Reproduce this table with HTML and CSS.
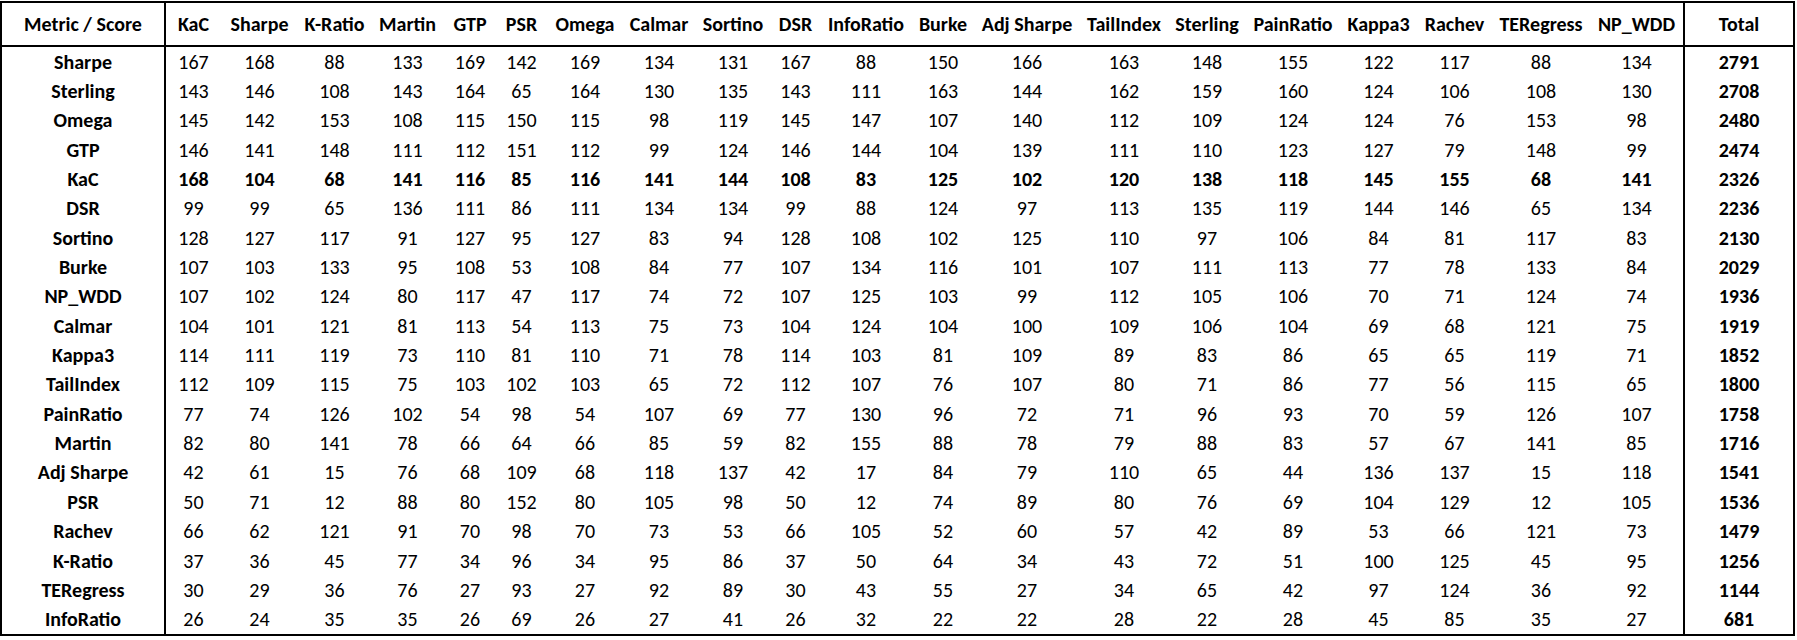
FILE: index.html
```html
<!DOCTYPE html>
<html lang="en">
<head>
<meta charset="utf-8">
<title>Metric / Score</title>
<link rel="stylesheet" href="styles.css">
</head>
<body>
<div class="table">
  <div class="row head">
    <div class="c metric">Metric / Score</div>
    <div class="c">KaC</div><div class="c">Sharpe</div><div class="c">K-Ratio</div><div class="c">Martin</div><div class="c">GTP</div><div class="c">PSR</div><div class="c">Omega</div><div class="c">Calmar</div><div class="c">Sortino</div><div class="c">DSR</div><div class="c">InfoRatio</div><div class="c">Burke</div><div class="c">Adj Sharpe</div><div class="c">TailIndex</div><div class="c">Sterling</div><div class="c">PainRatio</div><div class="c">Kappa3</div><div class="c">Rachev</div><div class="c">TERegress</div><div class="c">NP_WDD</div>
    <div class="c total">Total</div>
  </div>
  <div class="row"><div class="c metric">Sharpe</div><div class="c">167</div><div class="c">168</div><div class="c">88</div><div class="c">133</div><div class="c">169</div><div class="c">142</div><div class="c">169</div><div class="c">134</div><div class="c">131</div><div class="c">167</div><div class="c">88</div><div class="c">150</div><div class="c">166</div><div class="c">163</div><div class="c">148</div><div class="c">155</div><div class="c">122</div><div class="c">117</div><div class="c">88</div><div class="c">134</div><div class="c total">2791</div></div>
  <div class="row"><div class="c metric">Sterling</div><div class="c">143</div><div class="c">146</div><div class="c">108</div><div class="c">143</div><div class="c">164</div><div class="c">65</div><div class="c">164</div><div class="c">130</div><div class="c">135</div><div class="c">143</div><div class="c">111</div><div class="c">163</div><div class="c">144</div><div class="c">162</div><div class="c">159</div><div class="c">160</div><div class="c">124</div><div class="c">106</div><div class="c">108</div><div class="c">130</div><div class="c total">2708</div></div>
  <div class="row"><div class="c metric">Omega</div><div class="c">145</div><div class="c">142</div><div class="c">153</div><div class="c">108</div><div class="c">115</div><div class="c">150</div><div class="c">115</div><div class="c">98</div><div class="c">119</div><div class="c">145</div><div class="c">147</div><div class="c">107</div><div class="c">140</div><div class="c">112</div><div class="c">109</div><div class="c">124</div><div class="c">124</div><div class="c">76</div><div class="c">153</div><div class="c">98</div><div class="c total">2480</div></div>
  <div class="row"><div class="c metric">GTP</div><div class="c">146</div><div class="c">141</div><div class="c">148</div><div class="c">111</div><div class="c">112</div><div class="c">151</div><div class="c">112</div><div class="c">99</div><div class="c">124</div><div class="c">146</div><div class="c">144</div><div class="c">104</div><div class="c">139</div><div class="c">111</div><div class="c">110</div><div class="c">123</div><div class="c">127</div><div class="c">79</div><div class="c">148</div><div class="c">99</div><div class="c total">2474</div></div>
  <div class="row strong"><div class="c metric">KaC</div><div class="c">168</div><div class="c">104</div><div class="c">68</div><div class="c">141</div><div class="c">116</div><div class="c">85</div><div class="c">116</div><div class="c">141</div><div class="c">144</div><div class="c">108</div><div class="c">83</div><div class="c">125</div><div class="c">102</div><div class="c">120</div><div class="c">138</div><div class="c">118</div><div class="c">145</div><div class="c">155</div><div class="c">68</div><div class="c">141</div><div class="c total">2326</div></div>
  <div class="row"><div class="c metric">DSR</div><div class="c">99</div><div class="c">99</div><div class="c">65</div><div class="c">136</div><div class="c">111</div><div class="c">86</div><div class="c">111</div><div class="c">134</div><div class="c">134</div><div class="c">99</div><div class="c">88</div><div class="c">124</div><div class="c">97</div><div class="c">113</div><div class="c">135</div><div class="c">119</div><div class="c">144</div><div class="c">146</div><div class="c">65</div><div class="c">134</div><div class="c total">2236</div></div>
  <div class="row"><div class="c metric">Sortino</div><div class="c">128</div><div class="c">127</div><div class="c">117</div><div class="c">91</div><div class="c">127</div><div class="c">95</div><div class="c">127</div><div class="c">83</div><div class="c">94</div><div class="c">128</div><div class="c">108</div><div class="c">102</div><div class="c">125</div><div class="c">110</div><div class="c">97</div><div class="c">106</div><div class="c">84</div><div class="c">81</div><div class="c">117</div><div class="c">83</div><div class="c total">2130</div></div>
  <div class="row"><div class="c metric">Burke</div><div class="c">107</div><div class="c">103</div><div class="c">133</div><div class="c">95</div><div class="c">108</div><div class="c">53</div><div class="c">108</div><div class="c">84</div><div class="c">77</div><div class="c">107</div><div class="c">134</div><div class="c">116</div><div class="c">101</div><div class="c">107</div><div class="c">111</div><div class="c">113</div><div class="c">77</div><div class="c">78</div><div class="c">133</div><div class="c">84</div><div class="c total">2029</div></div>
  <div class="row"><div class="c metric">NP_WDD</div><div class="c">107</div><div class="c">102</div><div class="c">124</div><div class="c">80</div><div class="c">117</div><div class="c">47</div><div class="c">117</div><div class="c">74</div><div class="c">72</div><div class="c">107</div><div class="c">125</div><div class="c">103</div><div class="c">99</div><div class="c">112</div><div class="c">105</div><div class="c">106</div><div class="c">70</div><div class="c">71</div><div class="c">124</div><div class="c">74</div><div class="c total">1936</div></div>
  <div class="row"><div class="c metric">Calmar</div><div class="c">104</div><div class="c">101</div><div class="c">121</div><div class="c">81</div><div class="c">113</div><div class="c">54</div><div class="c">113</div><div class="c">75</div><div class="c">73</div><div class="c">104</div><div class="c">124</div><div class="c">104</div><div class="c">100</div><div class="c">109</div><div class="c">106</div><div class="c">104</div><div class="c">69</div><div class="c">68</div><div class="c">121</div><div class="c">75</div><div class="c total">1919</div></div>
  <div class="row"><div class="c metric">Kappa3</div><div class="c">114</div><div class="c">111</div><div class="c">119</div><div class="c">73</div><div class="c">110</div><div class="c">81</div><div class="c">110</div><div class="c">71</div><div class="c">78</div><div class="c">114</div><div class="c">103</div><div class="c">81</div><div class="c">109</div><div class="c">89</div><div class="c">83</div><div class="c">86</div><div class="c">65</div><div class="c">65</div><div class="c">119</div><div class="c">71</div><div class="c total">1852</div></div>
  <div class="row"><div class="c metric">TailIndex</div><div class="c">112</div><div class="c">109</div><div class="c">115</div><div class="c">75</div><div class="c">103</div><div class="c">102</div><div class="c">103</div><div class="c">65</div><div class="c">72</div><div class="c">112</div><div class="c">107</div><div class="c">76</div><div class="c">107</div><div class="c">80</div><div class="c">71</div><div class="c">86</div><div class="c">77</div><div class="c">56</div><div class="c">115</div><div class="c">65</div><div class="c total">1800</div></div>
  <div class="row"><div class="c metric">PainRatio</div><div class="c">77</div><div class="c">74</div><div class="c">126</div><div class="c">102</div><div class="c">54</div><div class="c">98</div><div class="c">54</div><div class="c">107</div><div class="c">69</div><div class="c">77</div><div class="c">130</div><div class="c">96</div><div class="c">72</div><div class="c">71</div><div class="c">96</div><div class="c">93</div><div class="c">70</div><div class="c">59</div><div class="c">126</div><div class="c">107</div><div class="c total">1758</div></div>
  <div class="row"><div class="c metric">Martin</div><div class="c">82</div><div class="c">80</div><div class="c">141</div><div class="c">78</div><div class="c">66</div><div class="c">64</div><div class="c">66</div><div class="c">85</div><div class="c">59</div><div class="c">82</div><div class="c">155</div><div class="c">88</div><div class="c">78</div><div class="c">79</div><div class="c">88</div><div class="c">83</div><div class="c">57</div><div class="c">67</div><div class="c">141</div><div class="c">85</div><div class="c total">1716</div></div>
  <div class="row"><div class="c metric">Adj Sharpe</div><div class="c">42</div><div class="c">61</div><div class="c">15</div><div class="c">76</div><div class="c">68</div><div class="c">109</div><div class="c">68</div><div class="c">118</div><div class="c">137</div><div class="c">42</div><div class="c">17</div><div class="c">84</div><div class="c">79</div><div class="c">110</div><div class="c">65</div><div class="c">44</div><div class="c">136</div><div class="c">137</div><div class="c">15</div><div class="c">118</div><div class="c total">1541</div></div>
  <div class="row"><div class="c metric">PSR</div><div class="c">50</div><div class="c">71</div><div class="c">12</div><div class="c">88</div><div class="c">80</div><div class="c">152</div><div class="c">80</div><div class="c">105</div><div class="c">98</div><div class="c">50</div><div class="c">12</div><div class="c">74</div><div class="c">89</div><div class="c">80</div><div class="c">76</div><div class="c">69</div><div class="c">104</div><div class="c">129</div><div class="c">12</div><div class="c">105</div><div class="c total">1536</div></div>
  <div class="row"><div class="c metric">Rachev</div><div class="c">66</div><div class="c">62</div><div class="c">121</div><div class="c">91</div><div class="c">70</div><div class="c">98</div><div class="c">70</div><div class="c">73</div><div class="c">53</div><div class="c">66</div><div class="c">105</div><div class="c">52</div><div class="c">60</div><div class="c">57</div><div class="c">42</div><div class="c">89</div><div class="c">53</div><div class="c">66</div><div class="c">121</div><div class="c">73</div><div class="c total">1479</div></div>
  <div class="row"><div class="c metric">K-Ratio</div><div class="c">37</div><div class="c">36</div><div class="c">45</div><div class="c">77</div><div class="c">34</div><div class="c">96</div><div class="c">34</div><div class="c">95</div><div class="c">86</div><div class="c">37</div><div class="c">50</div><div class="c">64</div><div class="c">34</div><div class="c">43</div><div class="c">72</div><div class="c">51</div><div class="c">100</div><div class="c">125</div><div class="c">45</div><div class="c">95</div><div class="c total">1256</div></div>
  <div class="row"><div class="c metric">TERegress</div><div class="c">30</div><div class="c">29</div><div class="c">36</div><div class="c">76</div><div class="c">27</div><div class="c">93</div><div class="c">27</div><div class="c">92</div><div class="c">89</div><div class="c">30</div><div class="c">43</div><div class="c">55</div><div class="c">27</div><div class="c">34</div><div class="c">65</div><div class="c">42</div><div class="c">97</div><div class="c">124</div><div class="c">36</div><div class="c">92</div><div class="c total">1144</div></div>
  <div class="row"><div class="c metric">InfoRatio</div><div class="c">26</div><div class="c">24</div><div class="c">35</div><div class="c">35</div><div class="c">26</div><div class="c">69</div><div class="c">26</div><div class="c">27</div><div class="c">41</div><div class="c">26</div><div class="c">32</div><div class="c">22</div><div class="c">22</div><div class="c">28</div><div class="c">22</div><div class="c">28</div><div class="c">45</div><div class="c">85</div><div class="c">35</div><div class="c">27</div><div class="c total">681</div></div>
</div>
</body>
</html>
```

FILE: styles.css
```css
html, body {
  margin: 0;
  padding: 0;
  background: #ffffff;
}

body {
  padding-top: 1px;
  font-family: "Carlito", "Lato", "Liberation Sans", sans-serif;
  font-size: 20px;
  color: #000000;
}

.table {
  width: 1795px;
  box-sizing: border-box;
  border: 2px solid #000000;
}

.row {
  display: grid;
  grid-template-columns: 164px 55px 77px 73px 73px 52px 51px 76px 72px 76px 49px 92px 62px 106px 88px 78px 94px 77px 75px 98px 93px 110px;
  height: 29.35px;
}

.row.head {
  height: 44px;
  box-sizing: border-box;
  border-bottom: 2px solid #000000;
  font-weight: 700;
}

.row.strong {
  font-weight: 700;
}

.c {
  display: flex;
  align-items: center;
  justify-content: center;
  white-space: nowrap;
  box-sizing: border-box;
}

.c.metric {
  border-right: 2px solid #000000;
  font-weight: 700;
}

.c.total {
  border-left: 2px solid #000000;
  font-weight: 700;
}
```
